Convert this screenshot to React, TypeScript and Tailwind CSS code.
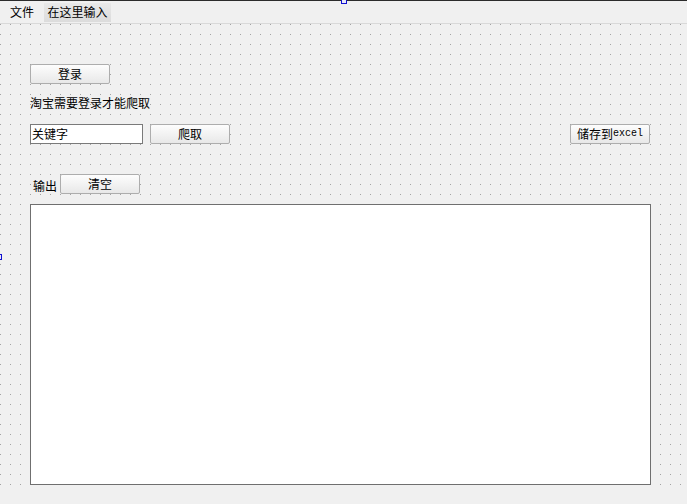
import React from 'react';

const font = { fontFamily: '"Noto Sans CJK SC", "Liberation Sans", sans-serif' };

const QButton: React.FC<{ className?: string; children: React.ReactNode }> = ({ className = '', children }) => (
  <div
    className={`h-[20px] w-[80px] flex items-center justify-center rounded-[2px] border border-[#adadad] bg-gradient-to-b from-[#fdfdfd] to-[#e8e8e8] text-[12px] leading-[12px] text-black ${className}`}
  >
    {children}
  </div>
);

const DotGrid: React.FC = () => (
  <svg className="absolute inset-0 h-full w-full" shapeRendering="crispEdges">
    <defs>
      <pattern id="dots" width="10" height="10" patternUnits="userSpaceOnUse">
        <rect x="0" y="0" width="1" height="1" fill="#a3a3a3" />
      </pattern>
    </defs>
    <rect width="100%" height="100%" fill="url(#dots)" />
  </svg>
);

export default function App() {
  return (
    <div className="relative h-[504px] w-[687px] overflow-hidden bg-[#f0f0f0] text-black" style={font}>
      {/* menu bar */}
      <div className="h-[24px] border-t border-b border-t-[#2b2b2b] border-b-[#d9d9d9] flex items-center text-[12px] leading-[12px]">
        <div className="ml-[10px] w-[34px]">文件</div>
        <div className="h-[19px] w-[67px] flex items-center justify-center bg-gradient-to-b from-[#e9e9e9] via-[#e2e2e2] to-[#dcdcdc]">
          在这里输入
        </div>
      </div>

      {/* form canvas */}
      <div className="relative h-[468px]">
        <DotGrid />
        <div className="relative flex flex-col pl-[30px]">
          <QButton className="mt-[40px]">登录</QButton>
          <div className="mt-[13px] h-[12px] text-[12px] leading-[12px]">淘宝需要登录才能爬取</div>

          <div className="mt-[15px] flex items-center">
            <div className="h-[20px] w-[113px] border border-[#7a7a7a] bg-white pl-[1px] text-[12px] leading-[18px]">
              关键字
            </div>
            <QButton className="ml-[7px]">爬取</QButton>
            <QButton className="ml-[340px]">
              储存到<span className="text-[10px]" style={{ fontFamily: '"Liberation Mono", monospace' }}>excel</span>
            </QButton>
          </div>

          <div className="mt-[30px] flex items-center">
            <div className="ml-[3px] w-[27px] text-[12px] leading-[12px] mt-[3px]">输出</div>
            <QButton>清空</QButton>
          </div>

          <div className="mt-[10px] h-[281px] w-[621px] border border-[#6f6f6f] bg-white" />
        </div>
      </div>

      {/* selection handles */}
      <div className="absolute left-[341px] top-[-2px] h-[6px] w-[6px] border border-[#1010d0] bg-[#e8e8f8]" />
      <div className="absolute left-[-4px] top-[254px] h-[6px] w-[6px] border border-[#1010d0] bg-[#e8e8f8]" />
    </div>
  );
}
